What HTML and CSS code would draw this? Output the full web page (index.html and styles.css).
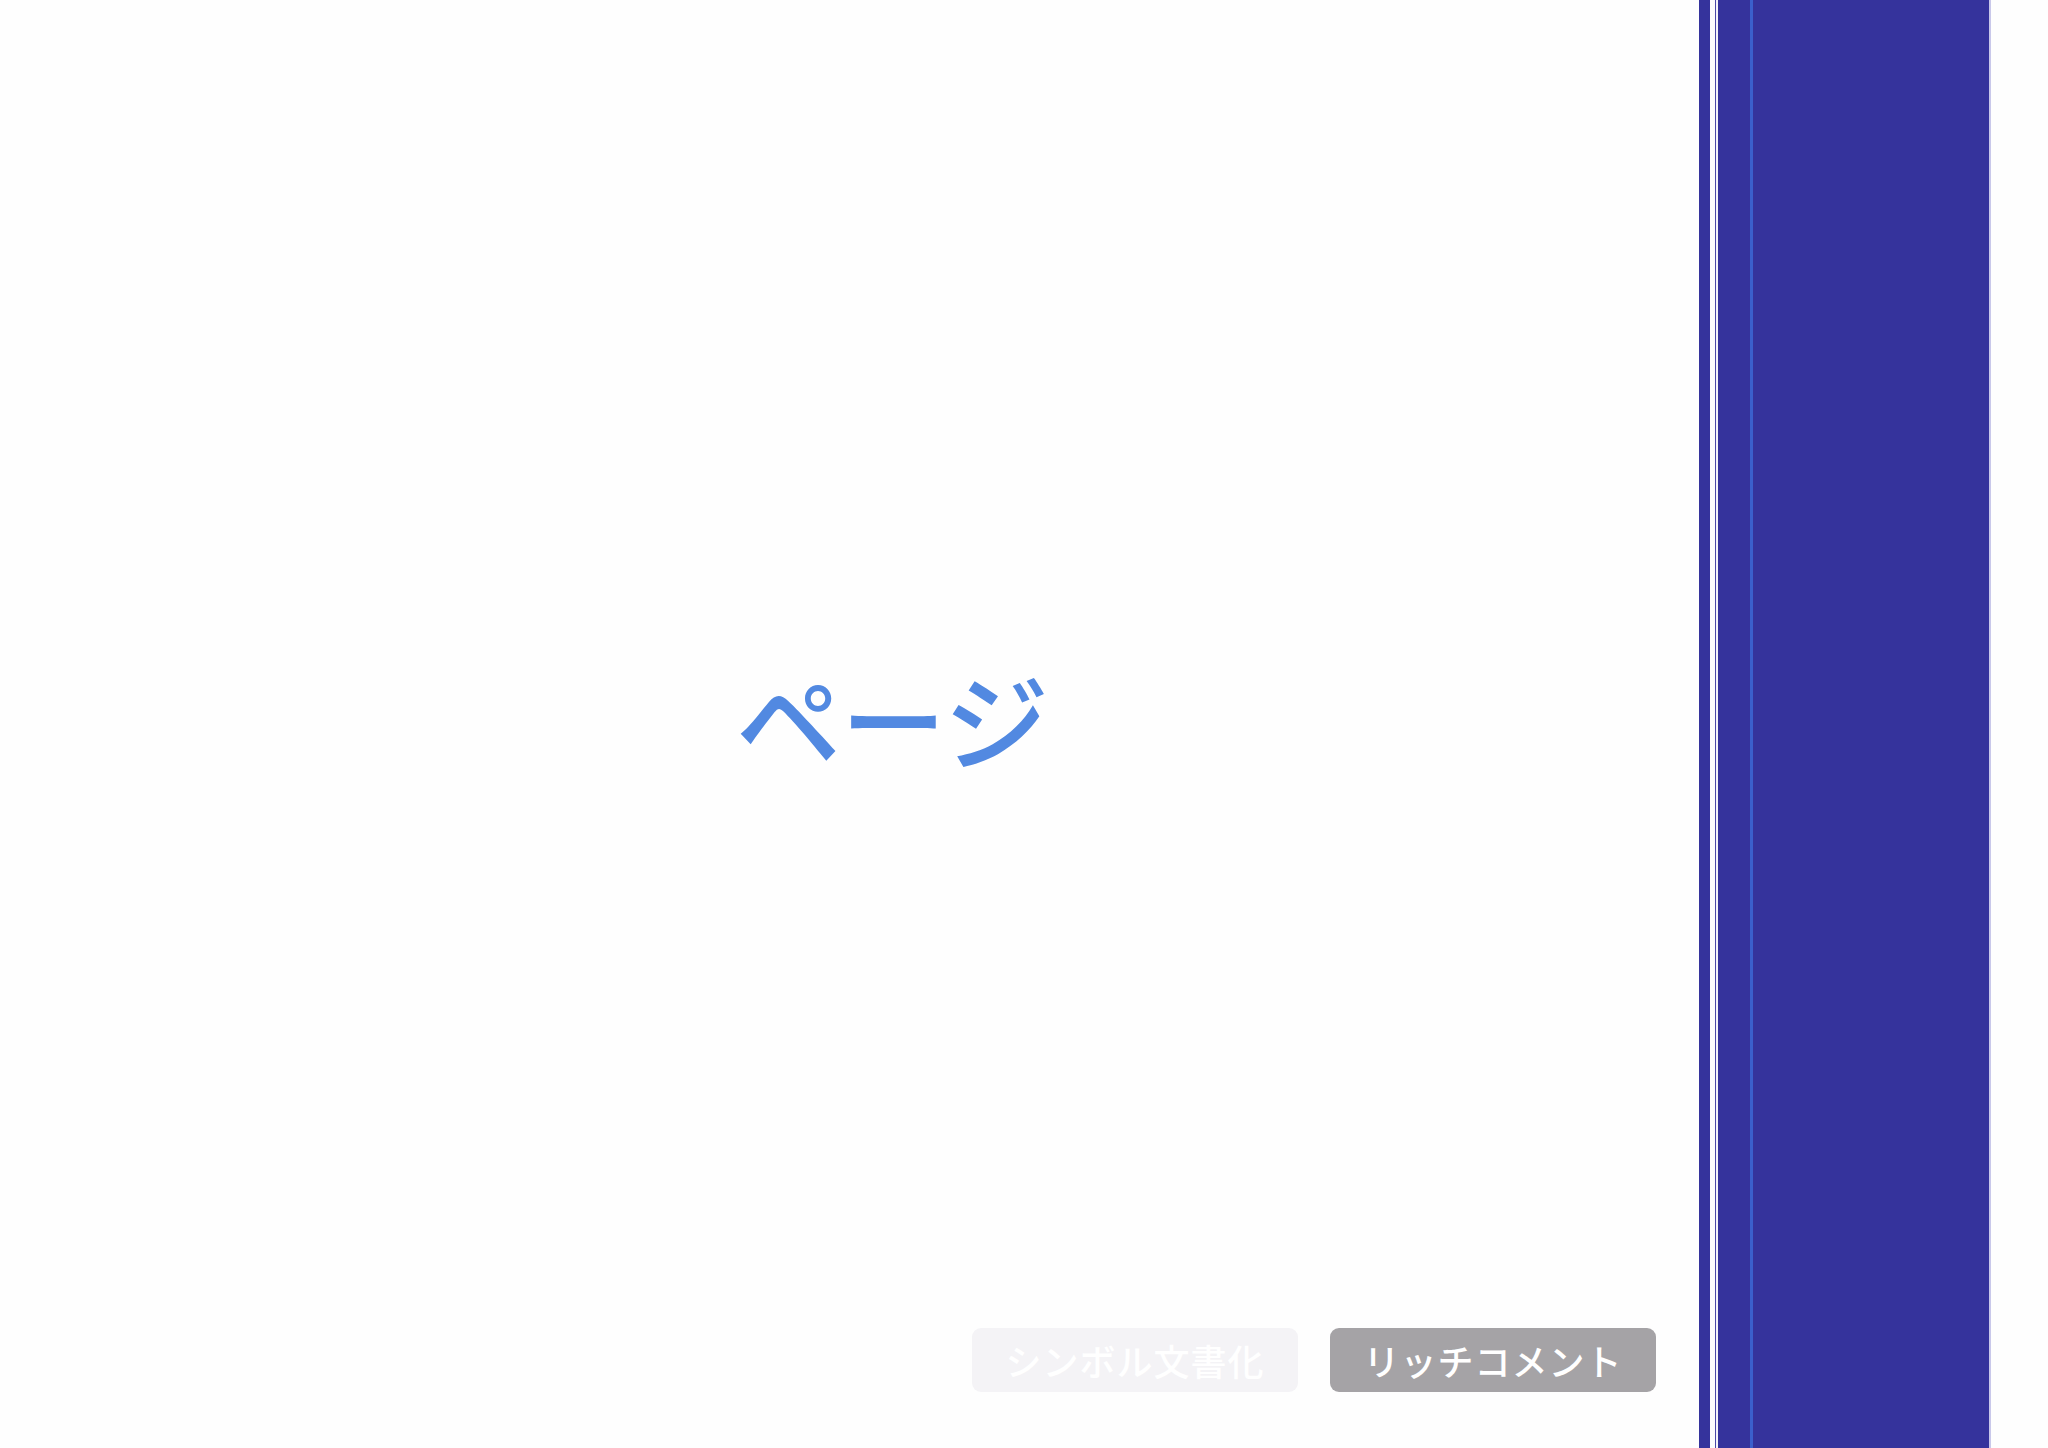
FILE: index.html
```html
<!DOCTYPE html>
<html lang="ja">
<head>
<meta charset="utf-8">
<title>ページ</title>
<link rel="stylesheet" href="styles.css">
</head>
<body>
<div class="app">
  <main class="main">
    <div class="page-title">ページ</div>
    <div class="actions">
      <button class="btn btn-light">シンボル文書化</button>
      <button class="btn btn-gray">リッチコメント</button>
    </div>
  </main>
  <aside class="side">
    <div class="s-bar1"></div>
    <div class="s-gap1"></div>
    <div class="s-line"></div>
    <div class="s-gap2"></div>
    <div class="s-bar2"></div>
    <div class="s-accent"></div>
    <div class="s-bar3"></div>
    <div class="s-edge"></div>
  </aside>
  <div class="rest"></div>
</div>
</body>
</html>
```

FILE: styles.css
```css
html, body {
  margin: 0;
  padding: 0;
  background: #fefefe;
}
body {
  font-family: "Noto Sans CJK JP", "Noto Sans", sans-serif;
}
.app {
  display: flex;
  width: 2048px;
  height: 1448px;
  overflow: hidden;
}
.main {
  width: 1699px;
  flex: none;
  display: grid;
  grid-template: 1fr / 1fr;
  background: #fefefe;
}
.page-title {
  grid-area: 1 / 1;
  align-self: center;
  justify-self: center;
  margin-left: 86px;
  margin-bottom: 16px;
  font-size: 105px;
  font-weight: 500;
  color: #5289e1;
  line-height: 1;
  letter-spacing: 0;
}
.actions {
  grid-area: 1 / 1;
  align-self: end;
  justify-self: end;
  display: flex;
  gap: 32px;
  margin: 0 43px 56px 0;
}
.btn {
  width: 326px;
  height: 64px;
  border: none;
  border-radius: 9px;
  font-family: "Noto Sans CJK JP", "Noto Sans", sans-serif;
  font-size: 36px;
  font-weight: 500;
  color: #ffffff;
  letter-spacing: 1px;
  padding: 0;
  display: flex;
  align-items: center;
  justify-content: center;
}
.btn-light {
  background: #f4f3f6;
}
.btn-gray {
  background: #a5a3a6;
}
.side {
  display: flex;
  flex: none;
  height: 100%;
}
.side > div { height: 100%; }
.s-bar1 { width: 11px; background: #35339c; }
.s-gap1 { width: 5px; background: #fdfdfe; }
.s-line { width: 1px; background: #4b49a8; }
.s-gap2 { width: 2px; background: #f4f4fa; }
.s-bar2 { width: 32px; background: #35339c; }
.s-accent { width: 3px; background: #3b5fcc; }
.s-bar3 { width: 236px; background: #35339c; }
.s-edge { width: 2px; background: #c9c8ea; }
.rest {
  flex: 1;
  background: #fefefe;
}
```
